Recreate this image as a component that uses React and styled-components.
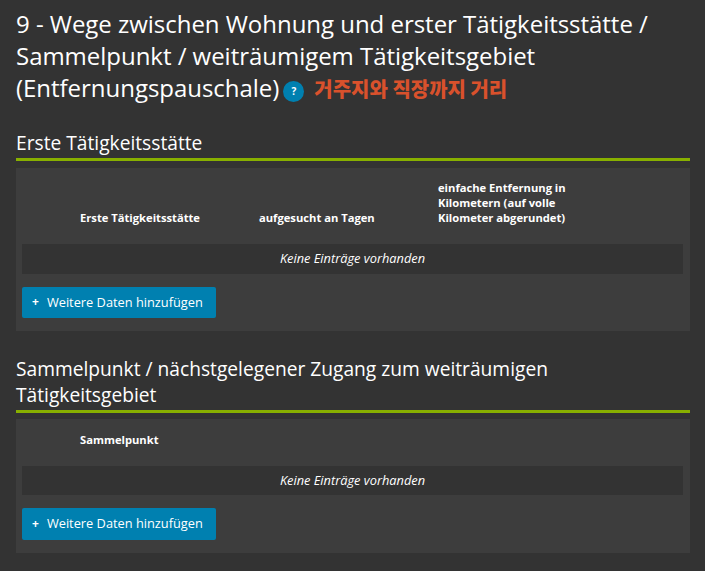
import React from 'react';
import styled, { createGlobalStyle } from 'styled-components';

const GlobalStyle = createGlobalStyle`
  html, body {
    margin: 0;
    background: #333333;
    color: #ffffff;
    font-family: "Open Sans", "Noto Sans CJK KR", sans-serif;
  }
`;

const Page = styled.div`
  width: 705px;
  height: 571px;
  overflow: hidden;
  box-sizing: border-box;
  padding: 8px 15px 0 16px;
`;

const Title = styled.h1`
  margin: 0 0 25px;
  font-size: 24px;
  line-height: 32px;
  font-weight: 400;
  letter-spacing: -0.03px;
`;

const HelpBadge = styled.span`
  display: inline-flex;
  align-items: center;
  justify-content: center;
  width: 21px;
  height: 21px;
  margin-left: 4px;
  border-radius: 50%;
  background: #0080b0;
  font-size: 10px;
  font-weight: 700;
  line-height: 1;
  vertical-align: 2px;
`;

const Note = styled.span`
  margin-left: 10px;
  color: #d9512c;
  font-family: "Noto Sans CJK KR", sans-serif;
  font-size: 20px;
  font-weight: 900;
`;

const SectionTitle = styled.h2`
  margin: 0 0 6.5px;
  padding-bottom: 2px;
  border-bottom: 3px solid #88b000;
  font-size: 19.2px;
  line-height: 26px;
  font-weight: 400;
`;

const Panel = styled.section`
  background: #3d3d3d;
  padding: 12.5px 7px 13px 6px;
  margin-bottom: 24.5px;
`;

const HeadRow = styled.div`
  display: grid;
  grid-template-columns: 58px 179px 179px 130px;
  align-items: end;
  margin-bottom: 19px;
`;

const HeadCell = styled.div`
  grid-column: ${p => p.$col};
  font-size: 11.2px;
  line-height: 15px;
  font-weight: 700;
`;

const EmptyRow = styled.div`
  box-sizing: border-box;
  height: 29.5px;
  padding-bottom: 1px;
  background: #333333;
  display: flex;
  align-items: center;
  justify-content: center;
  font-size: 12.8px;
  font-style: italic;
`;

const AddButton = styled.button`
  display: flex;
  align-items: center;
  gap: 8px;
  height: 31.5px;
  margin-top: 13px;
  padding: 0 13px 1px 10px;
  border: 0;
  border-radius: 2px;
  background: #0080b0;
  color: #ffffff;
  font-family: inherit;
  font-size: 12.8px;
`;

const Plus = styled.span`
  font-size: 12px;
  font-weight: 700;
`;

const DataSection = ({ heading, columns }) => (
  <>
    <SectionTitle>{heading}</SectionTitle>
    <Panel>
      <HeadRow>
        {columns.map((col, i) => (
          <HeadCell key={col} $col={i + 2}>{col}</HeadCell>
        ))}
      </HeadRow>
      <EmptyRow>Keine Einträge vorhanden</EmptyRow>
      <AddButton><Plus>+</Plus>Weitere Daten hinzufügen</AddButton>
    </Panel>
  </>
);

export default function App() {
  return (
    <Page>
      <GlobalStyle />
      <Title>
        9 - Wege zwischen Wohnung und erster Tätigkeitsstätte / Sammelpunkt / weiträumigem Tätigkeitsgebiet (Entfernungspauschale)
        <HelpBadge>?</HelpBadge>
        <Note>거주지와 직장까지 거리</Note>
      </Title>
      <DataSection
        heading="Erste Tätigkeitsstätte"
        columns={[
          'Erste Tätigkeitsstätte',
          'aufgesucht an Tagen',
          'einfache Entfernung in Kilometern (auf volle Kilometer abgerundet)',
        ]}
      />
      <DataSection
        heading="Sammelpunkt / nächstgelegener Zugang zum weiträumigen Tätigkeitsgebiet"
        columns={['Sammelpunkt']}
      />
    </Page>
  );
}
